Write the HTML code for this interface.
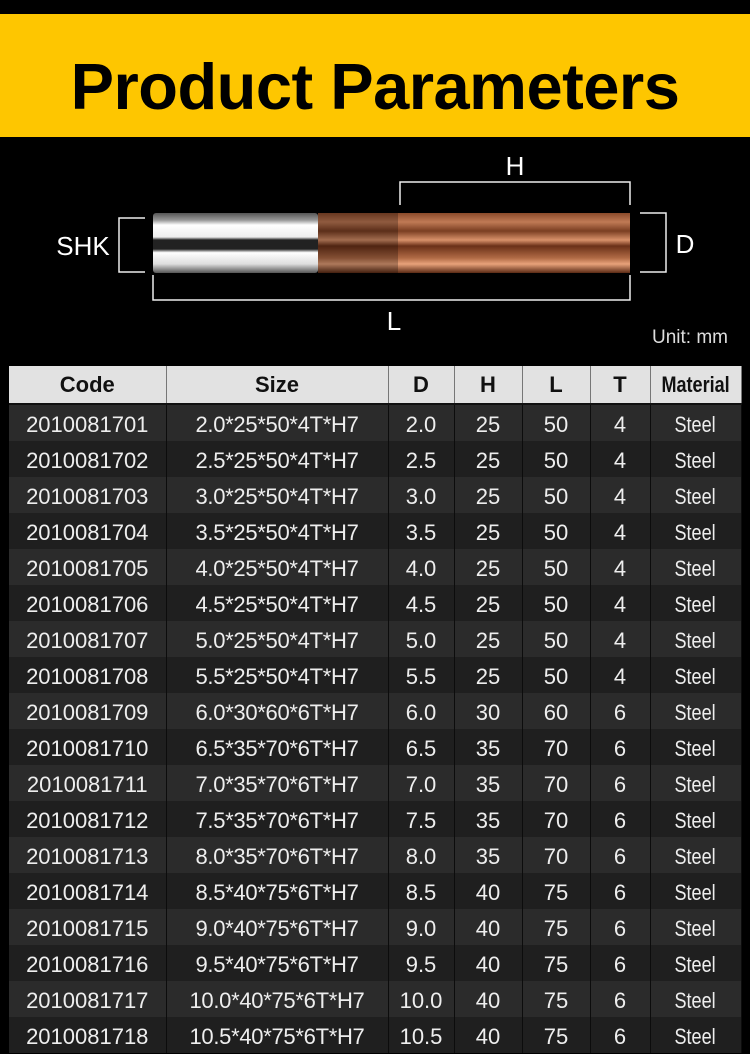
<!DOCTYPE html>
<html><head><meta charset="utf-8"><style>
body{margin:0;background:#000;width:750px;height:1054px;overflow:hidden;font-family:"Liberation Sans",sans-serif;position:relative}
.band{position:absolute;left:0;top:14px;width:750px;height:123px;background:#fec600}
.band h1{margin:0;position:absolute;left:0;width:750px;top:40px;text-align:center;font-size:65px;line-height:66px;font-weight:bold;color:#000;letter-spacing:-0.5px}
table{position:absolute;left:9px;top:366px;border-collapse:collapse;table-layout:fixed;width:732px}
td,th{padding:0;text-align:center;height:36px;font-size:22px;border-right:1.5px solid #111;white-space:nowrap;overflow:hidden}
td{padding-top:3px;height:33px}
th{background:#e2e2e2;color:#111;font-weight:bold;font-size:22px;height:37px;border-right:1.5px solid #777;border-bottom:2px solid #111}
td{color:#eee;border-right:1.5px solid #0c0c0c}
td:nth-child(2){letter-spacing:-0.3px}
tr:nth-child(odd) td{background:#1f1f1f}
tr:nth-child(even) td{background:#2b2b2b}
.c{display:inline-block;transform:scaleX(.82)}
</style></head><body>
<div class="band"><h1>Product Parameters</h1></div>
<svg width="750" height="360" style="position:absolute;left:0;top:0">
<defs>
<linearGradient id="sh" x1="0" y1="0" x2="0" y2="1">
<stop offset="0" stop-color="#555"/><stop offset=".12" stop-color="#999"/><stop offset=".2" stop-color="#fff"/><stop offset=".4" stop-color="#eee"/><stop offset=".45" stop-color="#222"/><stop offset=".6" stop-color="#222"/><stop offset=".66" stop-color="#fff"/><stop offset=".85" stop-color="#ddd"/><stop offset="1" stop-color="#555"/></linearGradient>
<linearGradient id="cu" x1="0" y1="0" x2="0" y2="1">
<stop offset="0" stop-color="#8a4a2a"/><stop offset=".15" stop-color="#c07a55"/><stop offset=".3" stop-color="#7a3e22"/><stop offset=".45" stop-color="#d8916a"/><stop offset=".55" stop-color="#6a3018"/><stop offset=".75" stop-color="#b06a45"/><stop offset=".85" stop-color="#e8a27a"/><stop offset="1" stop-color="#5a2a14"/></linearGradient>
</defs>
<rect x="153" y="213" width="165" height="60" rx="3" fill="url(#sh)"/>
<rect x="318" y="213" width="312" height="60" fill="url(#cu)"/>
<rect x="318" y="213" width="80" height="60" fill="#000" opacity=".25"/>
<g fill="none" stroke="#eee" stroke-width="1.5">
<path d="M400 205V182H630V205"/>
<path d="M153 275V300H630V275"/>
<path d="M145 218H119V272H145"/>
<path d="M640 213H666V272H640"/>
</g>
<g fill="#fff" font-size="26">
<text x="515" y="175" text-anchor="middle">H</text>
<text x="685" y="253" text-anchor="middle">D</text>
<text x="83" y="255" text-anchor="middle">SHK</text>
<text x="394" y="330" text-anchor="middle">L</text>
<text x="728" y="343" text-anchor="end" font-size="19" fill="#ddd">Unit: mm</text>
</g>
</svg>
<table>
<colgroup><col style="width:157px"><col style="width:222px"><col style="width:66px"><col style="width:68px"><col style="width:68px"><col style="width:60px"><col style="width:91px"></colgroup>
<tr><th>Code</th><th>Size</th><th>D</th><th>H</th><th>L</th><th>T</th><th><span class="c">Material</span></th></tr>
<tr><td>2010081701</td><td>2.0*25*50*4T*H7</td><td>2.0</td><td>25</td><td>50</td><td>4</td><td><span class="c">Steel</span></td></tr>
<tr><td>2010081702</td><td>2.5*25*50*4T*H7</td><td>2.5</td><td>25</td><td>50</td><td>4</td><td><span class="c">Steel</span></td></tr>
<tr><td>2010081703</td><td>3.0*25*50*4T*H7</td><td>3.0</td><td>25</td><td>50</td><td>4</td><td><span class="c">Steel</span></td></tr>
<tr><td>2010081704</td><td>3.5*25*50*4T*H7</td><td>3.5</td><td>25</td><td>50</td><td>4</td><td><span class="c">Steel</span></td></tr>
<tr><td>2010081705</td><td>4.0*25*50*4T*H7</td><td>4.0</td><td>25</td><td>50</td><td>4</td><td><span class="c">Steel</span></td></tr>
<tr><td>2010081706</td><td>4.5*25*50*4T*H7</td><td>4.5</td><td>25</td><td>50</td><td>4</td><td><span class="c">Steel</span></td></tr>
<tr><td>2010081707</td><td>5.0*25*50*4T*H7</td><td>5.0</td><td>25</td><td>50</td><td>4</td><td><span class="c">Steel</span></td></tr>
<tr><td>2010081708</td><td>5.5*25*50*4T*H7</td><td>5.5</td><td>25</td><td>50</td><td>4</td><td><span class="c">Steel</span></td></tr>
<tr><td>2010081709</td><td>6.0*30*60*6T*H7</td><td>6.0</td><td>30</td><td>60</td><td>6</td><td><span class="c">Steel</span></td></tr>
<tr><td>2010081710</td><td>6.5*35*70*6T*H7</td><td>6.5</td><td>35</td><td>70</td><td>6</td><td><span class="c">Steel</span></td></tr>
<tr><td>2010081711</td><td>7.0*35*70*6T*H7</td><td>7.0</td><td>35</td><td>70</td><td>6</td><td><span class="c">Steel</span></td></tr>
<tr><td>2010081712</td><td>7.5*35*70*6T*H7</td><td>7.5</td><td>35</td><td>70</td><td>6</td><td><span class="c">Steel</span></td></tr>
<tr><td>2010081713</td><td>8.0*35*70*6T*H7</td><td>8.0</td><td>35</td><td>70</td><td>6</td><td><span class="c">Steel</span></td></tr>
<tr><td>2010081714</td><td>8.5*40*75*6T*H7</td><td>8.5</td><td>40</td><td>75</td><td>6</td><td><span class="c">Steel</span></td></tr>
<tr><td>2010081715</td><td>9.0*40*75*6T*H7</td><td>9.0</td><td>40</td><td>75</td><td>6</td><td><span class="c">Steel</span></td></tr>
<tr><td>2010081716</td><td>9.5*40*75*6T*H7</td><td>9.5</td><td>40</td><td>75</td><td>6</td><td><span class="c">Steel</span></td></tr>
<tr><td>2010081717</td><td>10.0*40*75*6T*H7</td><td>10.0</td><td>40</td><td>75</td><td>6</td><td><span class="c">Steel</span></td></tr>
<tr><td>2010081718</td><td>10.5*40*75*6T*H7</td><td>10.5</td><td>40</td><td>75</td><td>6</td><td><span class="c">Steel</span></td></tr>
</table>
</body></html>
